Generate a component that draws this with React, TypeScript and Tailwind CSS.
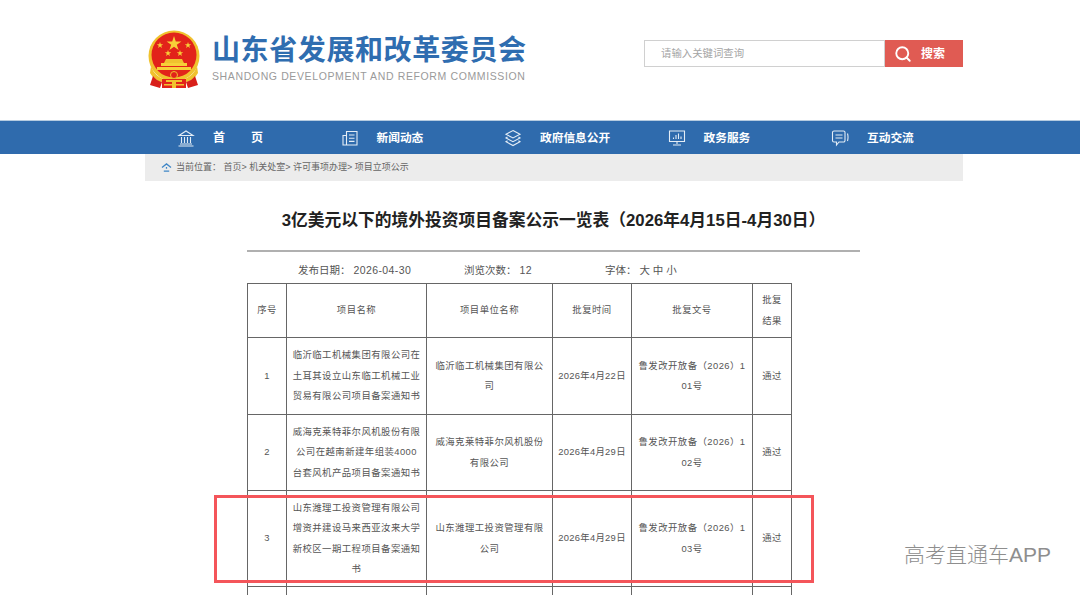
import { Search } from 'lucide-react';

const rows = [
  {
    no: '1',
    name: '临沂临工机械集团有限公司在土耳其设立山东临工机械工业贸易有限公司项目备案通知书',
    unit: '临沂临工机械集团有限公司',
    date: '2026年4月22日',
    doc: '鲁发改开放备（2026）101号',
    height: 'h-[77px]',
  },
  {
    no: '2',
    name: '威海克莱特菲尔风机股份有限公司在越南新建年组装4000台套风机产品项目备案通知书',
    unit: '威海克莱特菲尔风机股份有限公司',
    date: '2026年4月29日',
    doc: '鲁发改开放备（2026）102号',
    height: 'h-[76px]',
  },
  {
    no: '3',
    name: '山东潍理工投资管理有限公司增资并建设马来西亚汝来大学新校区一期工程项目备案通知书',
    unit: '山东潍理工投资管理有限公司',
    date: '2026年4月29日',
    doc: '鲁发改开放备（2026）103号',
    height: 'h-[96px]',
  },
];

const cell = 'border border-[#666] text-center align-middle break-all';

function Emblem() {
  return (
    <svg viewBox="0 0 52 58" className="w-[52px] h-[58px] shrink-0">
      <circle cx="26" cy="26" r="25.5" fill="#f0c22e" />
      <circle cx="26" cy="25" r="22.5" fill="#e2231a" />
      <path d="M26 6l1.8 5.4h5.6l-4.6 3.3 1.8 5.4-4.6-3.4-4.6 3.4 1.8-5.4-4.6-3.3h5.6z" fill="#f7d038" />
      <path d="M12 12l.8 2.3h2.4l-2 1.4.8 2.3-2-1.4-2 1.4.8-2.3-2-1.4h2.4zM40 12l.8 2.3h2.4l-2 1.4.8 2.3-2-1.4-2 1.4.8-2.3-2-1.4h2.4zM20 20l.8 2.3h2.4l-2 1.4.8 2.3-2-1.4-2 1.4.8-2.3-2-1.4h2.4zM32 20l.8 2.3h2.4l-2 1.4.8 2.3-2-1.4-2 1.4.8-2.3-2-1.4h2.4z" fill="#f7d038" />
      <path d="M18 29h16l2 4H16z" fill="#f0c22e" />
      <path d="M13 33h26v3H13zM9 37h34v3H9z" fill="#f7d038" />
      <path d="M3 36c3 8 7 11 13 13h20c6-2 10-5 13-13l1 7c-3 5-7 8-12 9H14C9 51 5 48 2 43z" fill="#f0c22e" />
      <path d="M5 46c2 3 5 5 9 6l-2 6-10-3zM47 46c-2 3-5 5-9 6l2 6 10-3z" fill="#d8201a" />
      <path d="M14 49h24v9H14z" fill="#e2231a" />
      <path d="M18 50h16v2H18zM24 52h4v6h-4zM16 54h20v1.5H16z" fill="#f0c22e" />
      <circle cx="26" cy="45" r="3.5" fill="#e2231a" stroke="#f0c22e" />
    </svg>
  );
}

function HomeIcon() {
  return (
    <svg viewBox="0 0 18 18" fill="none" stroke="#e4edf6" strokeWidth="1.1" className="w-[18px] h-[18px]">
      <path d="M2 6.5L9 2l7 4.5H2zM3 15h12M1.5 17h15M4.5 8v6M7.5 8v6M10.5 8v6M13.5 8v6" />
    </svg>
  );
}

function NewsIcon() {
  return (
    <svg viewBox="0 0 18 18" fill="none" stroke="#e4edf6" strokeWidth="1.1" className="w-[18px] h-[18px]">
      <path d="M5.5 2.5h10.500v13.500H2V6.500h3.500zM5.500 6.500V16M8 6h5.500M8 9.200h5.500M8 12.400h5.500" />
    </svg>
  );
}

function LayersIcon() {
  return (
    <svg viewBox="0 0 18 18" fill="none" stroke="#e4edf6" strokeWidth="1.1" className="w-[18px] h-[18px]">
      <path d="M9 1.500l7 3.700-7 3.700-7-3.700zM3.500 8L2 9l7 3.700L16 9l-1.500-1M3.500 11.700L2 12.700l7 3.800 7-3.800-1.500-1" />
    </svg>
  );
}

function MonitorIcon() {
  return (
    <svg viewBox="0 0 18 18" fill="none" stroke="#e4edf6" strokeWidth="1.1" className="w-[18px] h-[18px]">
      <path d="M1.500 2h15v10.500h-15zM9 12.500V15M5 16h8M5.500 10V8.500M8 10V6M10.500 10V4.500M13 10V7.500" />
    </svg>
  );
}

function ChatIcon() {
  return (
    <svg viewBox="0 0 18 18" fill="none" stroke="#e4edf6" strokeWidth="1.1" className="w-[18px] h-[18px]">
      <path d="M3 2h9.500a1.500 1.500 0 0 1 1.500 1.500v8a1.500 1.500 0 0 1-1.500 1.500H8l-2.500 3v-3H3a1.500 1.500 0 0 1-1.500-1.500v-8A1.500 1.500 0 0 1 3 2zM4.500 6h7M4.500 9h7M16.500 4.500c.7 2.500.7 5 0 7.500" />
    </svg>
  );
}

const navItems = [
  { label: '首页', icon: <HomeIcon />, spaced: true },
  { label: '新闻动态', icon: <NewsIcon /> },
  { label: '政府信息公开', icon: <LayersIcon /> },
  { label: '政务服务', icon: <MonitorIcon /> },
  { label: '互动交流', icon: <ChatIcon /> },
];

export default function App() {
  return (
    <div className="relative h-[595px] w-[1080px] overflow-hidden bg-white font-['Liberation_Sans','Noto_Sans_CJK_SC',sans-serif]">
      <header className="h-[120px] ml-[148px] w-[815px] flex items-start">
        <div className="mt-[30px]">
          <Emblem />
        </div>
        <div className="ml-[12px] mt-[33px] w-[320px]">
          <div className="text-[28px] leading-[36px] font-bold tracking-[0.6px] text-[#2f6db0] whitespace-nowrap">
            山东省发展和改革委员会
          </div>
          <div className="text-[10.5px] leading-[14px] tracking-[0.62px] text-[#9a9a9a] whitespace-nowrap">
            SHANDONG DEVELOPMENT AND REFORM COMMISSION
          </div>
        </div>
        <div className="ml-auto mt-[40px] flex h-[27px]">
          <div className="w-[241px] border border-[#d0d0d0] pl-[16px] text-[10.4px] leading-[25px] text-[#a5a5a5]">
            请输入关键词查询
          </div>
          <button className="w-[78px] bg-[#e05b53] flex items-center pl-[9px] text-white">
            <Search className="w-[18px] h-[18px]" strokeWidth={2.5} />
            <span className="ml-[9px] text-[12px] font-bold">搜索</span>
          </button>
        </div>
      </header>

      <nav className="h-[34px] bg-[#2f6bad] border-t border-[#b5cbe0] pl-[177px] flex items-center">
        {navItems.map((item) => (
          <div key={item.label} className="w-[163.5px] flex items-center shrink-0">
            {item.icon}
            {item.spaced ? (
              <span className="ml-[18px] w-[50px] flex justify-between text-[12px] font-bold text-white">
                <span>首</span>
                <span>页</span>
              </span>
            ) : (
              <span className="ml-[18px] text-[11.7px] font-bold text-white whitespace-nowrap">{item.label}</span>
            )}
          </div>
        ))}
      </nav>

      <main className="ml-[145px] w-[818px]">
        <div className="h-[27px] bg-[#ececec] pl-[16px] flex items-center text-[9px] text-[#666] whitespace-nowrap">
          <svg viewBox="0 0 12 10" className="w-[11px] h-[9px] mr-[4px]" fill="none" stroke="#3f86c6" strokeWidth="1.4">
            <path d="M1 5l5-4 5 4M3 9h6M6 4.500v2" />
          </svg>
          当前位置：&nbsp;首页&gt;&nbsp;机关处室&gt;&nbsp;许可事项办理&gt;&nbsp;项目立项公示
        </div>

        <div className="ml-[102px] w-[613px]">
          <h1 className="pt-[27px] text-center text-[16.75px] leading-[26px] font-bold text-[#222] whitespace-nowrap">
            3亿美元以下的境外投资项目备案公示一览表（2026年4月15日-4月30日）
          </h1>
          <div className="mt-[16px] h-[2px] bg-[#b0b0b0]" />
          <div className="h-[31px] pt-[7px] flex items-center text-[10.5px] text-[#555] whitespace-nowrap">
            <span className="ml-[51px] w-[166px]">
              发布日期：&nbsp;<span className="tracking-[0.4px]">2026-04-30</span>
            </span>
            <span className="w-[141px]">
              浏览次数：&nbsp;<span className="tracking-[0.4px]">12</span>
            </span>
            <span>字体：&nbsp;大 中 小</span>
          </div>
          <table className="table-fixed border-collapse w-[544px] text-[9.4px] leading-[20.5px] tracking-[0.45px] text-[#555]">
            <colgroup>
              <col className="w-[39px]" />
              <col className="w-[140px]" />
              <col className="w-[126px]" />
              <col className="w-[79px]" />
              <col className="w-[121px]" />
              <col className="w-[39px]" />
            </colgroup>
            <tbody>
              <tr className="h-[54px]">
                <td className={cell}>序号</td>
                <td className={cell}>项目名称</td>
                <td className={cell}>项目单位名称</td>
                <td className={cell}>批复时间</td>
                <td className={cell}>批复文号</td>
                <td className={`${cell} px-[8px]`}>批复结果</td>
              </tr>
              {rows.map((row) => (
                <tr key={row.no} className={row.height}>
                  <td className={cell}>{row.no}</td>
                  <td className={`${cell} px-[5px]`}>{row.name}</td>
                  <td className={`${cell} px-[5px]`}>{row.unit}</td>
                  <td className={`${cell} px-[1px] tracking-[0.3px]`}>{row.date}</td>
                  <td className={`${cell} px-[5px]`}>{row.doc}</td>
                  <td className={cell}>通过</td>
                </tr>
              ))}
              <tr className="h-[40px]">
                <td className={cell} />
                <td className={cell} />
                <td className={cell} />
                <td className={cell} />
                <td className={cell} />
                <td className={cell} />
              </tr>
            </tbody>
          </table>
        </div>
      </main>

      <div className="absolute left-[214px] top-[495px] w-[600px] h-[88px] border-[3px] border-[#f4555a]" />
      <div className="absolute left-[904px] top-[541px] text-[21px] leading-[28px] font-light text-[#8e8e8e] whitespace-nowrap">
        高考直通车APP
      </div>
    </div>
  );
}
